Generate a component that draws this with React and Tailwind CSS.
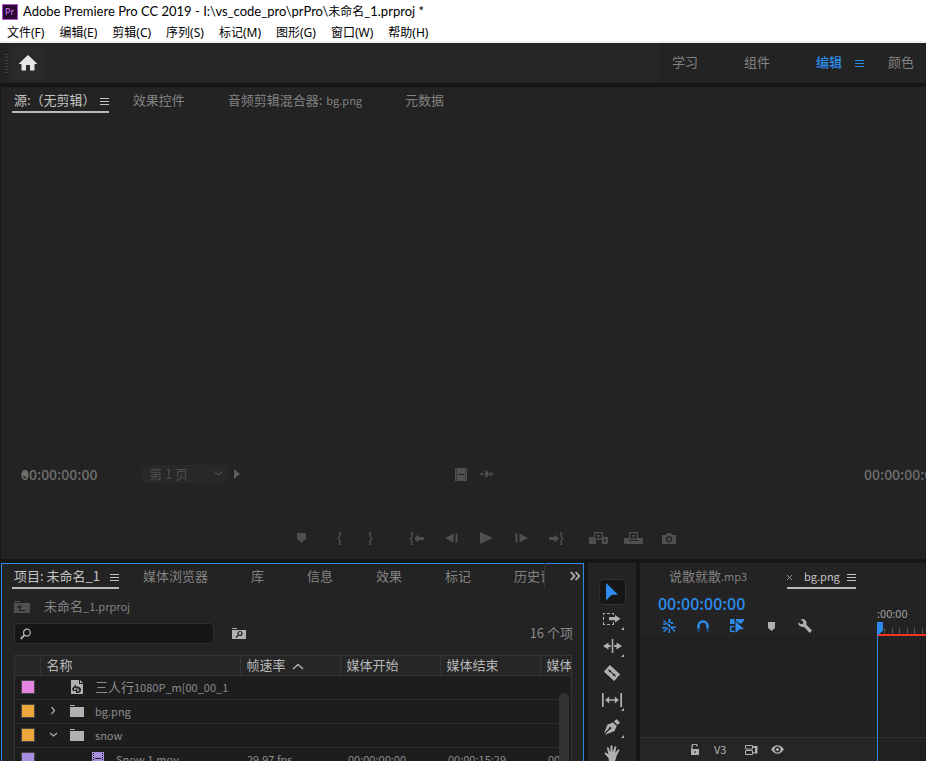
import React from "react";

const UI = "font-['Noto_Sans_CJK_SC',sans-serif]";

const menus = ["文件(F)", "编辑(E)", "剪辑(C)", "序列(S)", "标记(M)", "图形(G)", "窗口(W)", "帮助(H)"];

function Icon({ w, h, className = "", children }) {
  return (
    <svg width={w} height={h} viewBox={`0 0 ${w} ${h}`} fill="currentColor" aria-hidden="true" className={`shrink-0 ${className}`}>
      {children}
    </svg>
  );
}

const MenuLines = ({ className = "" }) => (
  <Icon w={9} h={8} className={className}>
    <path d="M0 0h9v1H0zM0 3h9v1H0zM0 6h9v1H0z" shapeRendering="crispEdges" />
  </Icon>
);

const MarkerIcon = () => (
  <Icon w={9} h={10}>
    <path d="M0 0.5Q0 0 .5 0h8Q9 0 9 .5V6L4.500 10 0 6z" />
  </Icon>
);

const OpenBrace = () => (
  <Icon w={4} h={13}>
    <path d="M2 0h2v1H3.500V5L2 6.500 3.500 8v4H4v1H2V8L0 6.500 2 5z" />
  </Icon>
);

const CloseBrace = () => (
  <Icon w={4} h={13}>
    <path d="M2 0H0v1h.5V5L2 6.500.5 8v4H0v1h2V8l2-1.500L2 5z" />
  </Icon>
);

const GoIn = () => (
  <Icon w={15} h={13}>
    <path d="M2 0h2v1H3.500V5L2 6.500 3.500 8v4H4v1H2V8L0 6.500 2 5z" />
    <path d="M5 6.500 9.500 2.500V5H15v3H9.500v2.500z" />
  </Icon>
);

const GoOut = () => (
  <Icon w={15} h={13}>
    <path d="M13 0h-2v1h.5V5L13 6.500 11.500 8v4H11v1h2V8l2-1.500L13 5z" />
    <path d="M10 6.500 5.500 2.500V5H0v3h5.500v2.500z" />
  </Icon>
);

const StepBack = () => (
  <Icon w={13} h={10}>
    <path d="M0 5 8.500.5v9zM10.500.5h2v9h-2z" />
  </Icon>
);

const StepForward = () => (
  <Icon w={13} h={10}>
    <path d="M13 5 4.500.5v9zM.5.5h2v9h-2z" />
  </Icon>
);

const Play = () => (
  <Icon w={13} h={12}>
    <path d="M0 0 13 6 0 12z" />
  </Icon>
);

const Insert = () => (
  <Icon w={19} h={12}>
    <path d="M5 0h9v5h4q1 0 1 1v5q0 1-1 1h-5V8H7v4H1q-1 0-1-1V6q0-1 1-1h4zM6.200 1.200v5.300h6.600v-5.300zM15 6.500v4L17.500 8.500z" fillRule="evenodd" />
    <path d="M7.500 3h4l-2 3z" />
  </Icon>
);

const Overwrite = () => (
  <Icon w={19} h={12}>
    <path d="M5 0h9v6h4q1 0 1 1v4q0 1-1 1H1q-1 0-1-1V7q0-1 1-1h4zM6.200 1.200v5.300h6.600v-5.300zM5 8v1h9V8z" fillRule="evenodd" />
    <path d="M7.500 3h4l-2 3z" />
  </Icon>
);

const Camera = () => (
  <Icon w={14} h={11}>
    <path d="M0 2h4l1-2h4l1 2h4v9H0zM7 3a3.200 3.200 0 1 0 .01 0zM7 4.500a1.700 1.700 0 1 1-.01 0z" fillRule="evenodd" />
  </Icon>
);

const FilmStrip = () => (
  <Icon w={12} h={13}>
    <path
      d="M0 0h12v13H0zM1 1v1h1V1zM1 3v1h1V3zM1 5v1h1V5zM1 7v1h1V7zM1 9v1h1V9zM1 11v1h1v-1zM10 1v1h1V1zM10 3v1h1V3zM10 5v1h1V5zM10 7v1h1V7zM10 9v1h1V9zM10 11v1h1v-1zM3 6v1h6V6z"
      fillRule="evenodd"
      shapeRendering="crispEdges"
    />
  </Icon>
);

const Wave = () => (
  <Icon w={14} h={10}>
    <path d="M0 4.500h14v1H0zM1.300 2 2.800 5 1.300 8zM5.300 0 6.600 2.500 7.800 2 9 5 7.800 8 6.600 7.500 5.300 10zM10.300 1.500 12.300 5l-2 3.500z" />
  </Icon>
);

const Folder = () => (
  <Icon w={14} h={12}>
    <path d="M0 0h5v1H0zM0 2h14v10H0z" shapeRendering="crispEdges" />
  </Icon>
);

const Chevron = ({ down }) =>
  down ? (
    <svg width="9" height="6" viewBox="0 0 9 6" fill="none" stroke="currentColor" strokeWidth="1.200" aria-hidden="true">
      <path d="M1 1l3.500 3L8 1" />
    </svg>
  ) : (
    <svg width="6" height="9" viewBox="0 0 6 9" fill="none" stroke="currentColor" strokeWidth="1.200" aria-hidden="true">
      <path d="M1.500 1 4.500 4.500l-3 3.500" />
    </svg>
  );

const SequenceIcon = () => (
  <Icon w={12} h={14}>
    <path d="M0 0h8v4h4v10H0zM9 0l3 3H9z" />
    <path d="M1 8.500 5 4.500v2q5-.3 5 3.500 0 2.500-3.500 3H5v-2H2z" fill="#1d1d1d" />
    <path d="M3 8.500 4.500 7.200v1.300h1.800L4.500 10H3zM6.300 8.200q2 .3 2 2-.3 1.300-2 1.300z" />
  </Icon>
);

const Corner = () => (
  <Icon w={3} h={3} className="absolute bottom-0.5 right-0.5">
    <path d="M3 0v3H0z" />
  </Icon>
);

function Tab({ children, active, gap = "gap-1" }) {
  return (
    <button
      type="button"
      role="tab"
      aria-selected={!!active}
      className={`flex h-[26px] shrink-0 items-center whitespace-nowrap border-b-2 pt-0.5 text-[13px] leading-5 ${gap} ${
        active ? "border-[#b9b9b9] pl-0.5 text-[#c4c4c4]" : "border-transparent pr-[19px] text-[#828282]"
      }`}
    >
      {children}
      {active && <MenuLines className="mt-1" />}
    </button>
  );
}

function TitleBar() {
  return (
    <header className="shrink-0 border-b-2 border-[#efefef] bg-white text-xs text-black">
      <div className="flex h-[23px] items-center gap-1 pl-[2px]">
        <svg width="16" height="16" viewBox="0 0 16 16" aria-hidden="true">
          <rect x="0.500" y="0.500" width="15" height="15" fill="#2a0634" stroke="#b04fcf" />
          <text x="3" y="11" fontSize="9" fill="#e085ff" fontFamily="Open Sans">Pr</text>
        </svg>
        <h1 className="ml-px whitespace-nowrap font-['Lato','Noto_Sans_CJK_SC',sans-serif] text-[13px]">
          Adobe Premiere Pro CC 2019 - I:\vs_code_pro\prPro\<span className="text-xs">未命名</span>_1.prproj *
        </h1>
      </div>
      <nav className="flex h-[18px] items-center gap-[15px] pl-[7px] pt-0.5 font-['Noto_Sans','Noto_Sans_CJK_SC',sans-serif]">
        {menus.map((m) => (
          <button type="button" key={m} className="whitespace-nowrap">{m}</button>
        ))}
      </nav>
    </header>
  );
}

function WorkspaceBar() {
  return (
    <div className="flex h-10 shrink-0 bg-[#262626]">
      <div className="flex min-w-0 flex-1 items-center">
        <div className="flex h-full w-2 items-center justify-end bg-[#232323]">
          <Icon w={3} h={20} className="text-[#444]">
            <path d="M0 1h3M0 4h3M0 7h3M0 10h3M0 13h3M0 16h3M0 19h3" stroke="currentColor" shapeRendering="crispEdges" />
          </Icon>
        </div>
        <button type="button" aria-label="主页" className="ml-1 flex size-8 items-center justify-center rounded-sm bg-[#2a2a2a] text-[#e6e6e6]">
          <Icon w={18} h={16}>
            <path d="M9 0 18 8.500V9H15.500V15.500H11V10H7v5.500H2.500V9H0V8.500z" />
          </Icon>
        </button>
      </div>
      <div className="flex w-[266px] shrink-0 overflow-hidden bg-[#232323] pb-0.5 pl-3 text-[13px] text-[#828282]">
        <button type="button" className="w-[72px] shrink-0 text-left">学习</button>
        <button type="button" className="w-[72px] shrink-0 text-left">组件</button>
        <button type="button" className="flex w-[72px] shrink-0 items-center gap-[13px] text-left font-medium text-[#2d8ceb]">
          编辑
          <MenuLines className="mt-1" />
        </button>
        <button type="button" className="w-[72px] shrink-0 text-left">颜色</button>
      </div>
    </div>
  );
}

function SourcePanel() {
  return (
    <section className="flex min-h-0 flex-[472] flex-col bg-[#232323]">
      <div role="tablist" className="flex gap-6 overflow-hidden pl-[11px]">
        <Tab active>源:（无剪辑）</Tab>
        <Tab>效果控件</Tab>
        <Tab>音频剪辑混合器: <span className="text-[11px]">bg.png</span></Tab>
        <Tab>元数据</Tab>
      </div>
      <div className="flex-1" />
      <div className="grid h-[18px] grid-cols-[454fr_39px_432fr] items-center text-[#5c5c5c]">
        <div className="flex items-center pl-5">
          <span className="relative flex w-[120px] items-center text-sm font-medium text-[#707070]">
            00:00:00:00
            <Icon w={6} h={8} className="absolute left-0 text-[#707070]"><path d="M0 4 6 0v8z" /></Icon>
          </span>
          <select aria-label="页" disabled className="h-[18px] w-[87px] appearance-none rounded-sm bg-[#282828] pl-2 text-[13px] leading-[18px] text-[#4c4c4c] opacity-100">
            <option>第 1 页</option>
          </select>
          <span className="-ml-3.5 mr-[11px] text-[#4a4a4a]"><Chevron down /></span>
          <Icon w={6} h={10}><path d="M0 0 6 5 0 10z" /></Icon>
        </div>
        <div className="flex items-center justify-between text-[#505050]">
          <FilmStrip />
          <Wave />
        </div>
        <div className="w-[62px] justify-self-end overflow-hidden whitespace-nowrap text-sm font-medium text-[#707070]">00:00:00:00</div>
      </div>
      <div className="mb-[7px] mt-[42px] flex h-7 items-center justify-center pl-[43px] text-[#4f4f4f]">
        <button type="button" aria-label="添加标记" className="mr-1 flex w-[35px] justify-center"><MarkerIcon /></button>
        <button type="button" aria-label="标记入点" className="flex w-8 justify-center"><OpenBrace /></button>
        <button type="button" aria-label="标记出点" className="mr-3 flex w-8 justify-center"><CloseBrace /></button>
        <button type="button" aria-label="转到入点" className="flex w-[35px] justify-center"><GoIn /></button>
        <button type="button" aria-label="后退一帧" className="flex w-[35px] justify-center"><StepBack /></button>
        <button type="button" aria-label="播放" className="flex w-[35px] justify-center"><Play /></button>
        <button type="button" aria-label="前进一帧" className="flex w-[35px] justify-center"><StepForward /></button>
        <button type="button" aria-label="转到出点" className="mr-[7px] flex w-[35px] justify-center"><GoOut /></button>
        <button type="button" aria-label="插入" className="flex w-[35px] justify-center"><Insert /></button>
        <button type="button" aria-label="覆盖" className="flex w-[35px] justify-center"><Overwrite /></button>
        <button type="button" aria-label="导出帧" className="flex w-[35px] justify-center"><Camera /></button>
      </div>
    </section>
  );
}

function Swatch({ color }) {
  return <span className={`mx-auto block size-3.5 border border-[#444] ${color}`} />;
}

function ProjectPanel() {
  const th = "border-r border-[#343434] pb-0.5 pl-1.5 text-left font-normal";
  const row = "h-6 border-b border-[#2b2b2b] *:pb-0.5";
  return (
    <section className="flex min-w-0 flex-[583] flex-col overflow-hidden bg-[#232323] shadow-[inset_1px_0_#2d8ceb,inset_-1px_0_#2d8ceb,inset_0_1px_#2d8ceb]">
      <div className="flex items-start justify-between">
        <div role="tablist" className="mr-[25px] flex min-w-0 gap-6 overflow-hidden border-r border-[#333] pl-[11px]">
          <Tab active gap="gap-2.5">项目: 未命名_1</Tab>
          <Tab>媒体浏览器</Tab>
          <Tab>库</Tab>
          <Tab>信息</Tab>
          <Tab>效果</Tab>
          <Tab>标记</Tab>
          <Tab>历史记录</Tab>
        </div>
        <button type="button" aria-label="更多面板" className="mr-1 mt-2 shrink-0 text-[#b5b5b5]">
          <svg width="10" height="10" viewBox="0 0 10 10" fill="none" stroke="currentColor" strokeWidth="1.800" aria-hidden="true">
            <path d="M.7 1 4.500 5 .7 9M5.500 1l3.800 4-3.800 4" />
          </svg>
        </button>
      </div>
      <div className="mt-2 flex h-5 items-center gap-3.5 pl-[13px]">
        <Icon w={16} h={12} className="text-[#505050]">
          <path d="M0 0h6v1H0zM0 2h16v10H0z" shapeRendering="crispEdges" />
          <path d="M3 6.500 5.500 4 8 6.500H6.200V9H11v1H5V6.500z" fill="#1d1d1d" />
        </Icon>
        <span className="pb-0.5 text-[13px] text-[#828282]">未命名<span className="text-[11px]">_1.prproj</span></span>
      </div>
      <div className="mt-1.5 flex h-[21px] items-center pl-[13px] pr-[11px]">
        <label className="flex h-[21px] w-[200px] items-center gap-1 rounded-sm border border-[#303030] bg-[#161616] pl-[5px]">
          <svg width="12" height="12" viewBox="0 0 12 12" fill="none" stroke="#b8b8b8" aria-hidden="true">
            <circle cx="7.500" cy="4.500" r="3.700" strokeWidth="1.300" />
            <path d="M4.800 7.200.8 11.200" strokeWidth="2" />
          </svg>
          <input aria-label="搜索" type="text" className="w-full min-w-0 bg-transparent text-xs text-[#b8b8b8] outline-none" />
        </label>
        <button type="button" aria-label="从查询创建新的素材箱" className="ml-[18px] text-[#b0b0b0]">
          <Icon w={14} h={11}>
            <path d="M0 0h5v1H0zM0 2h14v9H0z" shapeRendering="crispEdges" />
            <circle cx="8" cy="5.500" r="2" fill="none" stroke="#232323" strokeWidth="1.200" />
            <path d="M6.500 7 4 9.500" stroke="#232323" strokeWidth="1.300" />
          </Icon>
        </button>
        <span className="ml-auto pb-0.5 text-[13px] text-[#8a8a8a]">16 个项</span>
      </div>
      <div className="relative ml-[13px] mr-3 mt-[11px] min-h-0 flex-1 overflow-hidden border-x border-[#343434] bg-[#1d1d1d]">
        <table className="w-[626px] table-fixed border-collapse">
          <colgroup>
            <col className="w-[25px]" />
            <col className="w-[200px]" />
            <col className="w-[100px]" />
            <col className="w-[100px]" />
            <col className="w-[100px]" />
            <col className="w-[101px]" />
          </colgroup>
          <thead className="bg-[#262626] text-[13px] leading-[16px] text-[#b8b8b8]">
            <tr className="h-5 border-y border-[#343434]">
              <th className={th} aria-label="标签" />
              <th className={th}>名称</th>
              <th className={th}>
                <span className="flex items-center gap-1.5">
                  帧速率
                  <svg width="12" height="7" viewBox="0 0 12 7" fill="none" stroke="#b0b0b0" strokeWidth="1.500" className="mt-1" aria-hidden="true">
                    <path d="M1 6l5-4.500L11 6" />
                  </svg>
                </span>
              </th>
              <th className={th}>媒体开始</th>
              <th className={th}>媒体结束</th>
              <th className={th}>媒体持续</th>
            </tr>
          </thead>
          <tbody className="text-[11px] leading-5 text-[#8c8c8c]">
            <tr className={row}>
              <td><Swatch color="bg-[#e584e2]" /></td>
              <td colSpan={5}>
                <span className="flex items-center gap-3 pl-[31px] text-[#b0b0b0]">
                  <SequenceIcon />
                  <span className="whitespace-nowrap text-[#8c8c8c]"><span className="text-[13px]">三人行</span>1080P_m[00_00_1</span>
                </span>
              </td>
            </tr>
            <tr className={row}>
              <td><Swatch color="bg-[#eda63b]" /></td>
              <td colSpan={5}>
                <span className="flex items-center pl-2.5 text-[#b0b0b0]">
                  <span className="w-5"><Chevron /></span>
                  <Folder />
                  <span className="ml-[11px] text-[#8c8c8c]">bg.png</span>
                </span>
              </td>
            </tr>
            <tr className={row}>
              <td><Swatch color="bg-[#eda63b]" /></td>
              <td colSpan={5}>
                <span className="flex items-center pl-[9px] text-[#b0b0b0]">
                  <span className="w-[21px]"><Chevron down /></span>
                  <Folder />
                  <span className="ml-[11px] text-[#8c8c8c]">snow</span>
                </span>
              </td>
            </tr>
            <tr className={row}>
              <td><Swatch color="bg-[#a68fe0]" /></td>
              <td>
                <span className="flex items-center gap-3 pl-[52px] text-[#a68fe0]">
                  <FilmStrip />
                  <span className="text-[#8c8c8c]">Snow 1.mov</span>
                </span>
              </td>
              <td className="pl-[7px]">29.97 fps</td>
              <td className="pl-2">00:00:00:00</td>
              <td className="pl-2">00:00:15:29</td>
              <td className="pl-2">00:00:15:29</td>
            </tr>
          </tbody>
        </table>
        <div className="absolute bottom-0 right-0 top-[21px] w-3 bg-[#1d1d1d] pt-[17px]">
          <div className="h-full w-2.5 rounded-t-full bg-[#323232]" />
        </div>
      </div>
    </section>
  );
}

function Tool({ label, corner, selected, children }) {
  return (
    <button
      type="button"
      aria-label={label}
      className={`relative flex w-[27px] shrink-0 items-center justify-center rounded-sm ${
        selected ? "h-[26px] border border-[#303030] bg-[#161616] text-[#2d8ceb]" : "h-[27px] text-[#b0b0b0]"
      }`}
    >
      {children}
      {corner && <Corner />}
    </button>
  );
}

function ToolsPanel() {
  return (
    <section className="flex w-12 shrink-0 flex-col items-center overflow-hidden bg-[#232323] pt-4">
      <Tool label="选择工具" selected>
        <Icon w={14} h={18}><path d="M1 0 13 11.500 6.500 12 1 17.500z" /></Icon>
      </Tool>
      <Tool label="向前选择轨道工具" corner>
        <Icon w={18} h={12}>
          <path d="M0 0h2v1H1v1H0zM4 0h3v1H4zM9 0h2v2h-1V1H9zM0 4h1v3H0zM0 9h1v2h1v1H0zM4 11h3v1H4zM9 11h1V9h1v3H9z" shapeRendering="crispEdges" />
          <path d="M6 4h6V2l5.500 3.700L12 9.500V7.300H6z" />
        </Icon>
      </Tool>
      <Tool label="波纹编辑工具" corner>
        <Icon w={19} h={14}>
          <path d="M8.700 0h1.600v14h-1.600zM0 7l5.500-3.500V6h2.200v2H5.500v2.500zM19 7l-5.500-3.500V6h-2.200v2h2.200v2.500z" />
        </Icon>
      </Tool>
      <Tool label="剃刀工具">
        <Icon w={16} h={16}>
          <g transform="rotate(42 8 8)">
            <path d="M1 3.500h14v9H1zM3 7.500v1h1.500l.7 1 .9-1h3.800l.9 1 .7-1H13v-1h-1.500l-.7-1-.9 1H6.100l-.9-1-.7 1z" fillRule="evenodd" />
          </g>
        </Icon>
      </Tool>
      <Tool label="外滑工具" corner>
        <Icon w={20} h={14}>
          <path d="M0 0h1.700v14H0zM18.300 0H20v14h-1.700zM3.200 7l4-3.500V6.200h5.600V3.500l4 3.500-4 3.500V7.800H7.200v2.700z" />
        </Icon>
      </Tool>
      <Tool label="钢笔工具" corner>
        <Icon w={16} h={16}>
          <path d="M10 2.500 12 .5Q12.500 0 13 .5l2.500 2.500q.5.5 0 1L13.500 6z" />
          <path d="M9 3.500 12.700 7 10.500 12 2 15.500l-.6-.6L6 10.300a1.200 1.200 0 1 0-1-1L.7 14 .3 13.500 3.500 5.500z" />
        </Icon>
      </Tool>
      <Tool label="手形工具">
        <Icon w={17} h={17}>
          <path d="M5 16.500 4.500 13 .8 9Q0 7.800 1.300 7.600 2.300 7.600 4.500 9.500L3 3.500q-.2-1.200.8-1.300.8 0 1.100 1L6.300 7.500 6.500 1.500Q6.700.3 7.600.3q.9 0 1 1.200V7.500L10.500 2q.4-1 1.200-.8.9.3.6 1.400L11.200 8l2.600-3.300q.7-.8 1.400-.3.600.6 0 1.500L12.500 11q-.5 4-2 5.500z" />
        </Icon>
      </Tool>
    </section>
  );
}

function TimelinePanel() {
  return (
    <section className="flex min-w-0 flex-[286] flex-col overflow-hidden bg-[#232323]">
      <div role="tablist" className="flex gap-10 pl-[29px]">
        <button type="button" role="tab" aria-selected="false" className="flex h-[26px] w-[78px] shrink-0 items-center whitespace-nowrap text-[13px] text-[#828282]">
          说散就散<span className="text-[11px]">.mp3</span>
        </button>
        <button type="button" role="tab" aria-selected="true" className="flex h-[26px] w-[69px] shrink-0 items-center border-b-2 border-[#b9b9b9] pt-0.5 text-[11px] text-[#c4c4c4]">
          <svg width="5" height="5" viewBox="0 0 5 5" stroke="#8c8c8c" className="mr-3 mt-0.5 shrink-0" aria-hidden="true">
            <path d="M0 0l5 5M5 0 0 5" />
          </svg>
          bg.png
          <MenuLines className="ml-auto mt-1" />
        </button>
      </div>
      <div className="flex min-h-0 flex-1">
        <div className="flex w-[237px] shrink-0 flex-col">
          <div className="flex h-[47px] shrink-0 flex-col pl-[18px] text-[#2d8ceb]">
            <span className="mt-px text-base font-medium leading-[26px]">00:00:00:00</span>
            <div className="mt-0.5 flex h-4 items-center">
              <button type="button" aria-label="将序列作为嵌套插入" className="ml-1 w-[35px]">
                <Icon w={14} h={14}>
                  <path d="M6.500 0h2v4h-2zM7 5h1v2H7zM9 3h2v2H9zM0 8h4v1.500H0zM9.500 7.500H14V9H9.500zM6.500 10h1.500v4H6.500zM1 4.500h3v1.300H1z" />
                  <path d="M1.500 1.500 13 12.500M6 8.500 1.500 13" stroke="currentColor" strokeWidth="1.200" fill="none" />
                </Icon>
              </button>
              <button type="button" aria-label="对齐" className="w-[33px]">
                <Icon w={12} h={12}>
                  <path d="M1.500 8.500V6a4.500 4.500 0 0 1 9 0v2.500" fill="none" stroke="currentColor" strokeWidth="2.600" />
                  <path d="M.2 9h2.600v3H.2zM9.200 9h2.600v3H9.200z" fill="#174675" />
                </Icon>
              </button>
              <button type="button" aria-label="链接选择项" className="w-[38px]">
                <Icon w={14} h={14}>
                  <path d="M0 0h4.500v5H0zM6 0h8v1.500L11 5 6 2zM0 7h4.500v1.300H1.300v3.400h3.200V13H0z" />
                  <path d="M5.500 2.500 14 10 9.500 10.300 5.500 14z" />
                </Icon>
              </button>
              <button type="button" aria-label="添加标记" className="w-[30px] text-[#b0b0b0]">
                <Icon w={7} h={9}><path d="M0 0h7v6L3.500 9 0 6z" /></Icon>
              </button>
              <button type="button" aria-label="时间轴显示设置" className="text-[#b0b0b0]">
                <Icon w={14} h={14}>
                  <path d="M2.500.5Q6-.8 8 2q1 1.700.2 3.500L14 11.500 11.800 14 5.800 7.800Q3 8.500 1.200 6.500 0 5 .2 3.200L3 5.300 5 4.800 5.300 2.800z" />
                </Icon>
              </button>
            </div>
          </div>
          <div className="flex-1 bg-[#212121]" />
          <div className="flex h-6 shrink-0 items-center border-t border-[#303030] bg-[#252525] text-[#b0b0b0]">
            <button type="button" aria-label="切换轨道锁定" className="ml-[51px] w-[23px]">
              <Icon w={8} h={11}>
                <path d="M0 5h8v6H0zM3.500 7v2h1V7z" fillRule="evenodd" />
                <path d="M1 5V3a2.500 2.500 0 0 1 5.300-.5" fill="none" stroke="currentColor" strokeWidth="1.300" />
              </Icon>
            </button>
            <span className="w-[31px] text-[11px]">V3</span>
            <button type="button" aria-label="切换同步锁定" className="w-[26px]">
              <Icon w={13} h={10}>
                <path d="M.5.5h7v3.500h-7zM.5 5.500h7V9.500h-7z" fill="none" stroke="currentColor" />
                <path d="M8 1h4.500v7.500H8V7.300h2V2.700H8z" />
              </Icon>
            </button>
            <button type="button" aria-label="切换轨道输出">
              <Icon w={13} h={9}>
                <path d="M0 4.500Q3 .3 6.500.3T13 4.500Q10 8.700 6.500 8.700T0 4.500zm6.500-3a3 3 0 1 0 .01 0zM6.500 3a1.500 1.500 0 1 1-.01 0z" fillRule="evenodd" />
              </Icon>
            </button>
          </div>
        </div>
        <div className="flex min-w-0 flex-1 flex-col">
          <div className="relative h-[47px] shrink-0 border-b-2 border-[#fc3222] pt-[15px] text-[11px] leading-[18px] text-[#a0a0a0]">
            :00:00
            <svg className="absolute bottom-0 left-0 h-[7px] w-full" aria-hidden="true">
              <defs>
                <pattern id="ruler-ticks" width="15" height="7" patternUnits="userSpaceOnUse">
                  <path d="M7 1h1v6H7zM0 1h1v6H0z" fill="#555" />
                </pattern>
              </defs>
              <rect width="100%" height="7" fill="url(#ruler-ticks)" />
            </svg>
            <Icon w={6} h={13} className="absolute -bottom-px left-0 text-[#2d8ceb]">
              <path d="M0 0h6v8.500L1.500 13H0z" />
            </Icon>
          </div>
          <div className="flex flex-1 flex-col border-l border-[#2d8ceb] bg-[#212121]">
            <div className="flex-1" />
            <div className="h-6 border-t border-[#303030]" />
          </div>
        </div>
      </div>
    </section>
  );
}

export default function App() {
  return (
    <div className={`flex h-screen flex-col overflow-hidden bg-[#161616] ${UI}`}>
      <TitleBar />
      <WorkspaceBar />
      <main className="mt-1 flex min-h-0 flex-1 flex-col gap-1 pl-px">
        <SourcePanel />
        <div className="flex min-h-0 flex-[198] gap-1">
          <ProjectPanel />
          <ToolsPanel />
          <TimelinePanel />
        </div>
      </main>
    </div>
  );
}
